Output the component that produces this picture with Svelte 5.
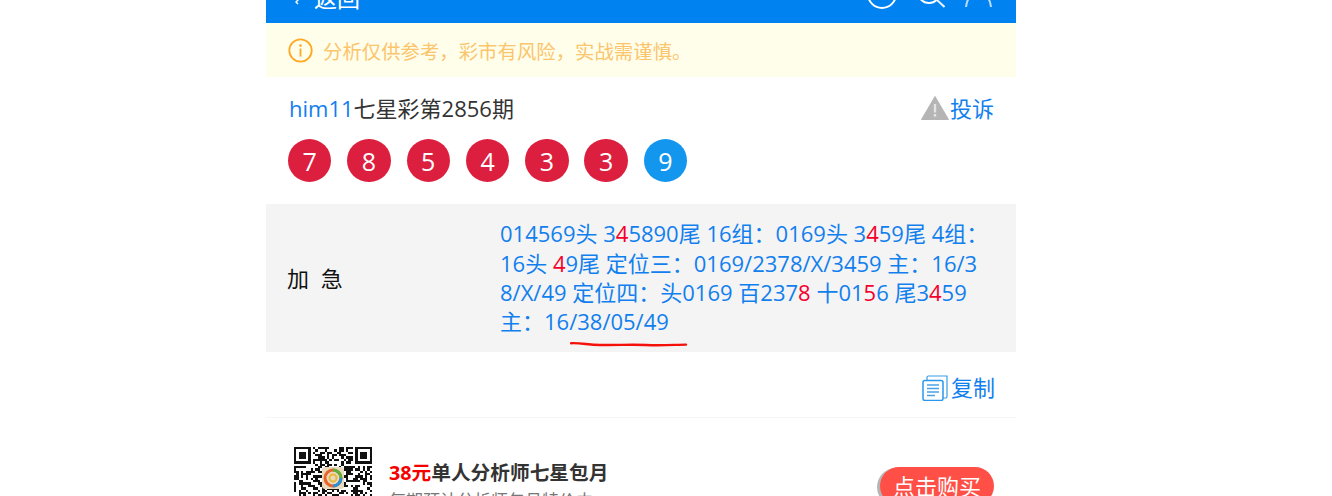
<script>
  const balls = [7, 8, 5, 4, 3, 3];
  const N = 33;
  const finder = (x, y, ox, oy) => {
    const a = x - ox, b = y - oy;
    if (a < 0 || b < 0 || a > 6 || b > 6) return null;
    return a === 0 || a === 6 || b === 0 || b === 6 || (a >= 2 && a <= 4 && b >= 2 && b <= 4);
  };
  let seed = 17;
  const rnd = () => ((seed = (seed * 1103515245 + 12345) & 0x7fffffff) >> 12) % 100 < 52;
  const cells = [];
  for (let y = 0; y < N; y++) {
    for (let x = 0; x < N; x++) {
      const r = rnd();
      const f = finder(x, y, 0, 0) ?? finder(x, y, N - 7, 0) ?? finder(x, y, 0, N - 7);
      const near = (x < 8 && y < 8) || (x >= N - 8 && y < 8) || (x < 8 && y >= N - 8);
      if (f === true || (f === null && !near && r)) cells.push([x, y]);
    }
  }
</script>

<div class="page">
  <header class="topbar">
    <div class="back">
      <svg class="chev" width="12" height="12" viewBox="0 0 12 12"><path d="M8 -3 L3 2 L5 4" fill="none" stroke="#fff" stroke-width="1.4" /></svg>
      <span>返回</span>
    </div>
    <div class="tools">
      <svg width="30" height="30" viewBox="0 0 30 30"><circle cx="15" cy="15" r="14" fill="none" stroke="#fff" stroke-width="2" /></svg>
      <svg class="lens" width="28" height="28" viewBox="0 0 28 28"><circle cx="12" cy="12" r="11" fill="none" stroke="#fff" stroke-width="2" /><path d="M20 20l7.500 7" stroke="#e6f2ff" stroke-width="2" fill="none" /></svg>
      <svg class="user" width="27" height="27" viewBox="0 0 27 27"><circle cx="13.500" cy="7" r="7" fill="none" stroke="#fff" stroke-width="1.500" /><path d="M1 27 C1.500 23 2.500 20 4 18 M26 27 C25.500 23 24.500 20 23 18" stroke="#b8dbff" stroke-width="2" fill="none" /></svg>
    </div>
  </header>

  <div class="notice">
    <svg width="25" height="25" viewBox="0 0 25 25"><circle cx="12.500" cy="12.500" r="11.200" fill="none" stroke="#fea824" stroke-width="1.800" /><circle cx="12.500" cy="7.600" r="1.300" fill="#fea824" /><rect x="11.600" y="10.600" width="1.800" height="8" fill="#fea824" /></svg>
    <span>分析仅供参考，彩市有风险，实战需谨慎。</span>
  </div>

  <section class="head">
    <div class="title">
      <div class="tname"><span class="blue">him11</span>七星彩第2856期</div>
      <div class="report blue">
        <svg width="28" height="24" viewBox="0 0 28 24"><path d="M14 0.500 L27.500 23.500 H0.500 Z" fill="#b5b5b5" stroke="#b5b5b5" stroke-linejoin="round" /><rect x="12.800" y="8" width="2.400" height="8.500" fill="#e4e4e4" /><rect x="12.800" y="18" width="2.400" height="2.600" fill="#e4e4e4" /></svg>
        <span>投诉</span>
      </div>
    </div>
    <div class="balls">
      {#each balls as b}
        <span class="ball">{b}</span>
      {/each}
      <span class="ball special">9</span>
    </div>
  </section>

  <section class="plan">
    <div class="label">加 急</div>
    <div class="content">
      014569头 3<b>4</b>5890尾 16组：0169头 3<b>4</b>59尾 4组：16头 <b>4</b>9尾 定位三：0169/2378/X/3459 主：16/38/X/49 定位四：头0169 百237<b>8</b> 十01<b>5</b>6 尾3<b>4</b>59 主：16/38/05/49
    </div>
    <svg class="scribble" width="118" height="8" viewBox="0 0 118 8"><path d="M1 2.200 C12 1.800 18 4 30 4 C50 4.200 60 3.400 76 4 C90 4.800 104 3.800 116 3.600" fill="none" stroke="#f5100c" stroke-width="2.400" stroke-linecap="round" /></svg>
  </section>

  <div class="copy blue">
    <svg width="26" height="26" viewBox="0 0 26 26" fill="none"><path d="M5 5V2.500A1.500 1.500 0 0 1 6.500 1H25v20.500A1.500 1.500 0 0 1 23.500 23H21" stroke="#3a9be8" stroke-width="1.200" /><rect x="1" y="5.500" width="20" height="20" rx="2" fill="#fff" stroke="#2a97ee" stroke-width="1.500" /><path d="M5 10h12M5 13.500h12M5 17h12M5 20.500h8" stroke="#4aa3e6" stroke-width="1.500" /></svg>
    <span>复制</span>
  </div>

  <section class="promo">
    <div class="qr">
      <svg width="78" height="78" viewBox="0 0 33 33" shape-rendering="crispEdges">
        {#each cells as c}
          <rect x={c[0]} y={c[1]} width="1" height="1" fill="#111" />
        {/each}
      </svg>
      <svg class="qrlogo" width="22" height="22" viewBox="0 0 22 22">
        <rect width="22" height="22" rx="3" fill="#e9d9bd" />
        <circle cx="11" cy="11" r="8" fill="none" stroke="#e8642c" stroke-width="3" />
        <path d="M11 3 A8 8 0 0 1 19 11" fill="none" stroke="#5cb13c" stroke-width="3" />
        <path d="M19 11 A8 8 0 0 1 11 19" fill="none" stroke="#2c8fd8" stroke-width="3" />
        <circle cx="11" cy="11" r="3.500" fill="none" stroke="#e8b93c" stroke-width="2" />
      </svg>
    </div>
    <div class="ptext">
      <div class="ptitle"><em>38元</em>单人分析师七星包月</div>
      <div class="psub">每期预计分析师包月特价中</div>
    </div>
    <div class="buy">点击购买</div>
  </section>
</div>

<style>
  :global(body) { margin: 0; background: #fff; overflow: hidden; }
  .page {
    width: 750px;
    height: 496px;
    margin-left: 266px;
    overflow: hidden;
    font-family: "Open Sans", "Noto Sans CJK SC", sans-serif;
    font-size: 22px;
    color: #333;
    position: relative;
  }
  .blue { color: #127fee; }
  .topbar {
    height: 23px;
    background: #0082f0;
    display: flex;
    justify-content: space-between;
    overflow: hidden;
    padding: 0 24px 0 27px;
    box-sizing: border-box;
    color: #fff;
  }
  .back { display: flex; align-items: flex-end; gap: 9px; height: 8px; line-height: 30px; font-size: 23px; }
  .back span { margin-bottom: -5px; }
  .chev { align-self: flex-start; }
  .tools { display: flex; align-items: flex-end; gap: 20px; height: 9px; }
  .tools svg { flex: none; }
  .lens { margin-bottom: 1px; }
  .user { margin-bottom: 2px; }
  .notice {
    height: 54px;
    background: #fffeeb;
    display: flex;
    align-items: center;
    gap: 10px;
    padding-left: 22px;
    color: #fbc56c;
    font-size: 19.400px;
  }
  .head { padding: 12px 22px 22px; height: 127px; box-sizing: border-box; }
  .title { display: flex; justify-content: space-between; align-items: center; height: 36px; }
  .tname { padding-left: 1px; }
  .report { display: flex; align-items: center; gap: 1px; }
  .report svg { margin-top: 2px; }
  .balls { display: flex; gap: 15.900px; margin-top: 14px; }
  .ball {
    width: 43.400px;
    height: 43.400px;
    border-radius: 50%;
    background: #dc1f3e;
    color: #fff;
    display: flex;
    align-items: center;
    justify-content: center;
    font-size: 25px;
  }
  .ball.special { background: #1296ee; }
  .plan {
    position: relative;
    height: 148px;
    background: #f4f4f4;
    display: flex;
    align-items: center;
    box-sizing: border-box;
    padding-left: 21px;
    color: #111;
  }
  .label { width: 213px; flex: none; word-spacing: 6px; margin-top: -2px; }
  .content {
    width: 491px;
    flex: none;
    color: #127fee;
    word-break: break-all;
    line-height: 29.300px;
  }
  .content b { color: #f5002d; font-weight: 400; }
  .scribble { position: absolute; left: 304px; top: 137px; }
  .copy {
    height: 66px;
    border-bottom: 1px solid #f6f6f6;
    box-sizing: border-box;
    display: flex;
    justify-content: flex-end;
    align-items: center;
    gap: 3px;
    padding: 6px 21px 0 0;
  }
  .copy svg { margin-left: -1px; }
  .copy span { margin-bottom: 4px; }
  .promo { display: flex; padding: 29px 22px 0 28px; align-items: flex-start; }
  .qr { position: relative; width: 78px; height: 78px; flex: none; }
  .qr svg { display: block; }
  .qrlogo { position: absolute; left: 28px; top: 20px; }
  .ptext { margin-left: 17px; padding-top: 11px; flex: 1; }
  .ptitle { font-size: 19.700px; font-weight: 700; line-height: 30px; color: #333; }
  .ptitle em { font-style: normal; color: #f50000; }
  .psub { font-size: 17px; line-height: 28px; color: #777; margin-top: -1px; }
  .buy {
    margin-top: 20px;
    width: 114px;
    height: 38px;
    border-radius: 19px;
    background: #ff4f46;
    box-shadow: -3px 1px 0 #b5b5b5;
    color: #fff;
    text-align: center;
    line-height: 38px;
    flex: none;
  }
</style>
